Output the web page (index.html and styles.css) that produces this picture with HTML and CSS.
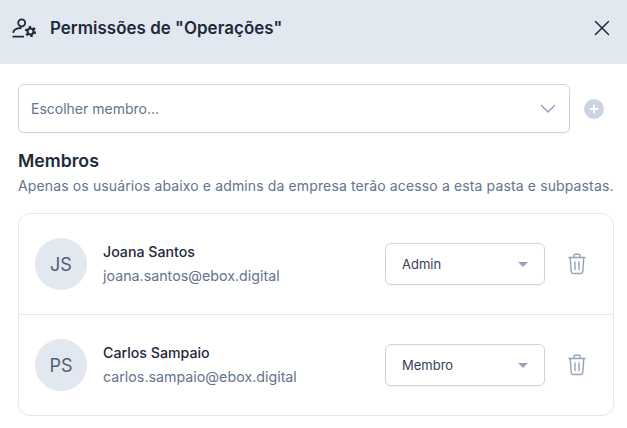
FILE: index.html
```html
<!DOCTYPE html>
<html>
<head>
    <title>Permissões</title>
    <link rel="stylesheet" href="styles.css">
</head>
<body>
    <div class="header">
        <div class="header-title">
            <svg class="header-icon" width="24" height="20" viewBox="0 0 24 20" fill="none" stroke="#1e293b" stroke-width="1.8" stroke-linecap="round" stroke-linejoin="round">
                <circle cx="9.700" cy="4.800" r="3.500"/>
                <path d="M1.300 14.200c.5-2.300 3.400-4 7.500-4.200M1.300 18.700h10"/>
                <circle cx="18.500" cy="13.500" r="3" stroke-width="2"/>
                <circle cx="18.500" cy="13.500" r="4.600" stroke-width="2" stroke-dasharray="2.400 2.420" stroke-linecap="butt"/>
            </svg>
            <h1>Permissões de "Operações"</h1>
        </div>
        <svg class="close-icon" width="16" height="16" viewBox="0 0 16 16" fill="none" stroke="#1e293b" stroke-width="1.5" stroke-linecap="round">
            <path d="M1.500 1.500l13 13M14.500 1.500l-13 13"/>
        </svg>
    </div>

    <div class="content">
        <div class="add-row">
            <div class="member-input">
                <span>Escolher membro...</span>
                <svg width="16" height="10" viewBox="0 0 16 10" fill="none" stroke="#94a3b8" stroke-width="1.5" stroke-linecap="round" stroke-linejoin="round">
                    <path d="M1.500 1.500L8 8l6.500-6.500"/>
                </svg>
            </div>
            <svg class="add-icon" width="20" height="20" viewBox="0 0 20 20">
                <circle cx="10" cy="10" r="10" fill="#cbd5e1"/>
                <path d="M10 6.500v7M6.500 10h7" stroke="#fff" stroke-width="2" stroke-linecap="round"/>
            </svg>
        </div>

        <h2>Membros</h2>
        <p class="hint">Apenas os usuários abaixo e admins da empresa terão acesso a esta pasta e subpastas.</p>

        <div class="member-list">
            <div class="member-row">
                <div class="avatar">JS</div>
                <div class="member-info">
                    <div class="member-name">Joana Santos</div>
                    <div class="member-email">joana.santos@ebox.digital</div>
                </div>
                <div class="role-select">
                    <span>Admin</span>
                    <i class="caret"></i>
                </div>
                <svg class="trash" width="18" height="22" viewBox="0 0 18 22" fill="none" stroke="#94a3b8" stroke-width="1.4" stroke-linecap="round" stroke-linejoin="round">
                    <path d="M1 4.500h16M6 4.500V2.500c0-.8.6-1.300 1.300-1.300h3.400c.7 0 1.300.5 1.300 1.300v2M2.200 4.500l1 14.300c.1 1 .8 1.700 1.800 1.700h8c1 0 1.700-.7 1.800-1.700l1-14.300M7 9v7.500M11 9v7.500"/>
                </svg>
            </div>
            <div class="member-row">
                <div class="avatar">PS</div>
                <div class="member-info">
                    <div class="member-name">Carlos Sampaio</div>
                    <div class="member-email">carlos.sampaio@ebox.digital</div>
                </div>
                <div class="role-select">
                    <span>Membro</span>
                    <i class="caret"></i>
                </div>
                <svg class="trash" width="18" height="22" viewBox="0 0 18 22" fill="none" stroke="#94a3b8" stroke-width="1.4" stroke-linecap="round" stroke-linejoin="round">
                    <path d="M1 4.500h16M6 4.500V2.500c0-.8.6-1.300 1.300-1.300h3.400c.7 0 1.300.5 1.300 1.300v2M2.200 4.500l1 14.300c.1 1 .8 1.700 1.800 1.700h8c1 0 1.700-.7 1.800-1.700l1-14.300M7 9v7.500M11 9v7.500"/>
                </svg>
            </div>
        </div>
    </div>
</body>
</html>
```

FILE: styles.css
```css
html, body {
    height: 100%;
}
body {
    margin: 0;
    font-family: Inter, "Noto Sans", sans-serif;
    color: #1e293b;
    background-color: white;
    overflow: hidden;
}
.header {
    height: 64px;
    background-color: #e2e8f0;
    display: flex;
    align-items: center;
    justify-content: space-between;
    padding: 0 17px 8px 12px;
    box-sizing: border-box;
}
.header-title {
    display: flex;
    align-items: center;
    gap: 14px;
}
h1 {
    margin: 0;
    font-size: 16.9px;
    font-weight: 600;
    letter-spacing: 0.05px;
}
.content {
    padding: 20px 13px 0 18px;
}
.add-row {
    display: flex;
    align-items: center;
    gap: 14px;
}
.member-input {
    width: 552px;
    height: 49px;
    box-sizing: border-box;
    border: 1px solid #cbd5e1;
    border-radius: 6px;
    box-shadow: 0 1px 2px rgba(0,0,0,0.05);
    padding: 0 13px 0 12px;
    display: flex;
    align-items: center;
    justify-content: space-between;
    font-size: 14px;
    color: #64748b;
}
h2 {
    margin: 17px 0 0;
    font-size: 17.7px;
    line-height: 22px;
    font-weight: 600;
}
.hint {
    margin: 5px 0 0;
    font-size: 14px;
    line-height: 18px;
    letter-spacing: 0.13px;
    color: #64748b;
    white-space: nowrap;
}
.member-list {
    margin-top: 18px;
    width: 596px;
    box-sizing: border-box;
    border: 1px solid #e2e8f0;
    border-radius: 12px;
}
.member-row {
    height: 100px;
    display: flex;
    align-items: center;
    padding: 0 27px 0 16px;
}
.member-row + .member-row {
    border-top: 1px solid #e2e8f0;
}
.avatar {
    width: 52px;
    height: 52px;
    border-radius: 50%;
    background-color: #e2e8f0;
    color: #526077;
    font-size: 18px;
    display: flex;
    align-items: center;
    justify-content: center;
    flex-shrink: 0;
}
.member-info {
    margin-left: 16px;
    flex: 1;
}
.member-name {
    font-size: 14.2px;
    line-height: 20px;
    font-weight: 500;
}
.member-email {
    margin-top: 4px;
    font-size: 14.25px;
    line-height: 20px;
    color: #64748b;
}
.role-select {
    width: 160px;
    height: 42px;
    box-sizing: border-box;
    border: 1px solid #cbd5e1;
    border-radius: 6px;
    box-shadow: 0 1px 2px rgba(0,0,0,0.05);
    padding: 0 16px;
    display: flex;
    align-items: center;
    justify-content: space-between;
    font-size: 13px;
    color: #334155;
}
.caret {
    width: 0;
    height: 0;
    border-left: 5px solid transparent;
    border-right: 5px solid transparent;
    border-top: 5px solid #94a3b8;
}
.trash {
    margin-left: 23px;
}
```
